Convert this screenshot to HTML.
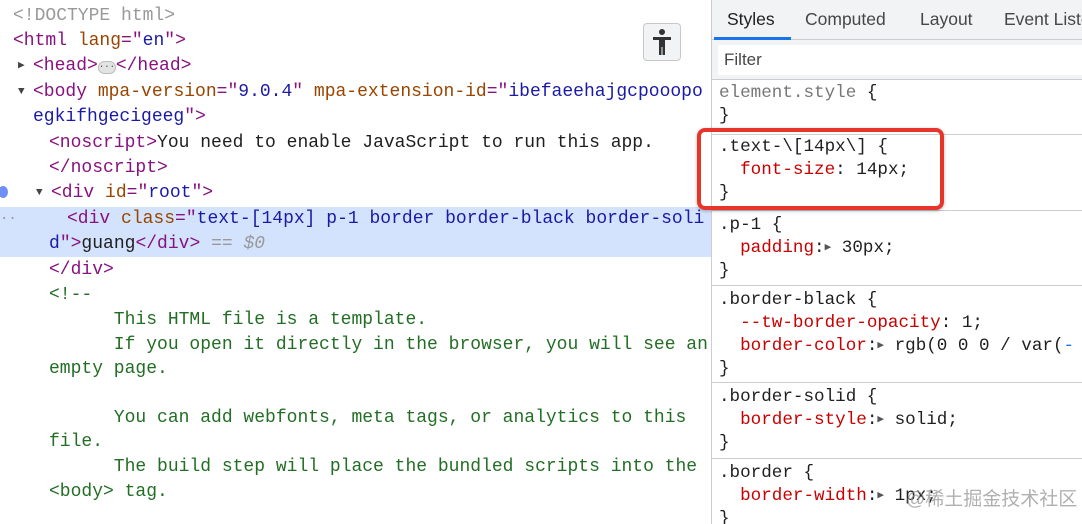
<!DOCTYPE html>
<html><head><style>
*{margin:0;padding:0;box-sizing:border-box}
body{width:1082px;height:524px;overflow:hidden;background:#fff;position:relative;font-family:"Liberation Mono",monospace;}
.l{position:absolute;font-size:18px;line-height:25px;white-space:pre;color:#1f1f1f}
.t{color:#881280}.a{color:#994500}.v{color:#1a1aa6}.c{color:#236e25}.g{color:#999}
.p{color:#c80000}
.tr{position:absolute;font-size:11px;color:#444;line-height:12px}
#sel{position:absolute;left:0;top:207px;width:711px;height:50px;background:#d3e3fd}
#div{position:absolute;left:711px;top:0;width:1px;height:524px;background:#cbcdd1}
#rp{position:absolute;left:712px;top:0;width:370px;height:524px;background:#fff;overflow:hidden}
#tabs{position:absolute;left:0;top:0;width:370px;height:40px;background:#f1f3f4;border-bottom:1px solid #cbcdd1;font-family:"Liberation Sans",sans-serif;font-size:17.5px;color:#474747;white-space:nowrap}
#tabs span{position:absolute;top:9px}
#filter{position:absolute;left:0;top:40px;width:370px;height:40px;background:#f1f3f4;border-bottom:1px solid #cbcdd1}
#filter div{position:absolute;left:6px;top:5px;right:0;height:30px;background:#fff;font-family:"Liberation Sans",sans-serif;font-size:17px;color:#474747;padding:5px 6px}
.sep{position:absolute;left:0;width:370px;height:1px;background:#cbcdd1}
.r{position:absolute;left:7px;font-size:17.6px;line-height:23px;white-space:pre;color:#1f1f1f}
.tri{font-size:11px;color:#555;vertical-align:2px}
</style></head><body>
<div id="sel"></div>
<div class="l g" style="left:13px;top:4px">&lt;!DOCTYPE html&gt;</div>
<div class="l" style="left:13px;top:29px"><span class="t">&lt;html</span> <span class="a">lang</span><span class="t">="</span><span class="v">en</span><span class="t">"&gt;</span></div>
<div class="tr" style="left:18px;top:60px">▶</div>
<div class="l" style="left:33px;top:54px"><span class="t">&lt;head&gt;</span><span style="display:inline-block;width:18px;height:13px;background:#e3e3e3;border:1px solid #bbb;border-radius:7px;font-size:9px;line-height:10px;text-align:center;vertical-align:1px;color:#444">···</span><span class="t">&lt;/head&gt;</span></div>
<div class="tr" style="left:18px;top:86px">▼</div>
<div class="l" style="left:33px;top:80px"><span class="t">&lt;body</span> <span class="a">mpa-version</span><span class="t">="</span><span class="v">9.0.4</span><span class="t">"</span> <span class="a">mpa-extension-id</span><span class="t">="</span><span class="v">ibefaeehajgcpooopo</span></div>
<div class="l" style="left:33px;top:105px"><span class="v">egkifhgecigeeg</span><span class="t">"&gt;</span></div>
<div class="l" style="left:49px;top:131px"><span class="t">&lt;noscript&gt;</span>You need to enable JavaScript to run this app.</div>
<div class="l" style="left:49px;top:156px"><span class="t">&lt;/noscript&gt;</span></div>
<div style="position:absolute;left:-2px;top:186px;width:10px;height:12px;border-radius:50%;background:#6e8ff5"></div>
<div class="tr" style="left:36px;top:187px">▼</div>
<div class="l" style="left:51px;top:181px"><span class="t">&lt;div</span> <span class="a">id</span><span class="t">="</span><span class="v">root</span><span class="t">"&gt;</span></div>
<div class="l g" style="left:0;top:207px;font-size:14px">··</div>
<div class="l" style="left:67px;top:207px"><span class="t">&lt;div</span> <span class="a">class</span><span class="t">="</span><span class="v">text-[14px] p-1 border border-black border-soli</span></div>
<div class="l" style="left:49px;top:232px"><span class="v">d</span><span class="t">"&gt;</span>guang<span class="t">&lt;/div&gt;</span> <span class="g">== <i>$0</i></span></div>
<div class="l" style="left:49px;top:258px"><span class="t">&lt;/div&gt;</span></div>
<div class="l c" style="left:49px;top:283px">&lt;!--</div>
<div class="l c" style="left:49px;top:308px">      This HTML file is a template.</div>
<div class="l c" style="left:49px;top:333px">      If you open it directly in the browser, you will see an</div>
<div class="l c" style="left:49px;top:357px">empty page.</div>
<div class="l c" style="left:49px;top:406px">      You can add webfonts, meta tags, or analytics to this</div>
<div class="l c" style="left:49px;top:430px">file.</div>
<div class="l c" style="left:49px;top:455px">      The build step will place the bundled scripts into the</div>
<div class="l c" style="left:49px;top:480px">&lt;body&gt; tag.</div>
<div style="position:absolute;left:643px;top:23px;width:38px;height:38px;background:#f1f3f4;border:1px solid #c8c8c8;border-radius:4px">
<svg width="38" height="38" viewBox="0 0 38 38"><circle cx="18" cy="8" r="3" fill="#333"/><path d="M9 13h18v3h-6v15h-2.5v-8h-1v8H15V16H9z" fill="#333"/></svg></div>
<div id="div"></div>
<div id="rp">
<div id="tabs"><span style="left:15px;color:#1f1f1f">Styles</span><span style="left:93px">Computed</span><span style="left:208px">Layout</span><span style="left:292px">Event Listeners</span>
<div style="position:absolute;left:2px;top:37px;width:77px;height:3px;background:#1a73e8"></div></div>
<div id="filter"><div>Filter</div></div>
<div class="r" style="top:82px"><span style="color:#777">element.style</span> {
}</div>
<div class="sep" style="top:134px"></div>
<div class="r" style="top:136px">.text-\[14px\] {
  <span class="p">font-size</span>: 14px;
}</div>
<div class="sep" style="top:210px"></div>
<div class="r" style="top:214px">.p-1 {
  <span class="p">padding</span>:<span class="tri">▶</span> 30px;
}</div>
<div class="sep" style="top:285px"></div>
<div class="r" style="top:289px">.border-black {
  <span class="p">--tw-border-opacity</span>: 1;
  <span class="p">border-color</span>:<span class="tri">▶</span> rgb(0 0 0 / var(<span style="color:#1a73e8">-</span>
}</div>
<div class="sep" style="top:382px"></div>
<div class="r" style="top:386px">.border-solid {
  <span class="p">border-style</span>:<span class="tri">▶</span> solid;
}</div>
<div class="sep" style="top:458px"></div>
<div class="r" style="top:462px">.border {
  <span class="p">border-width</span>:<span class="tri">▶</span> 1px;
}</div>
<div style="position:absolute;left:194px;top:484px;font-family:'Liberation Sans','Noto Sans CJK SC',sans-serif;font-size:19px;color:rgba(150,150,150,.75);white-space:nowrap">@稀土掘金技术社区</div>
</div>
<div style="position:absolute;left:697px;top:128px;width:247px;height:82px;border:4px solid #e8352b;border-radius:8px;box-shadow:0 1px 3px rgba(0,0,0,.3)"></div>
</body></html>
